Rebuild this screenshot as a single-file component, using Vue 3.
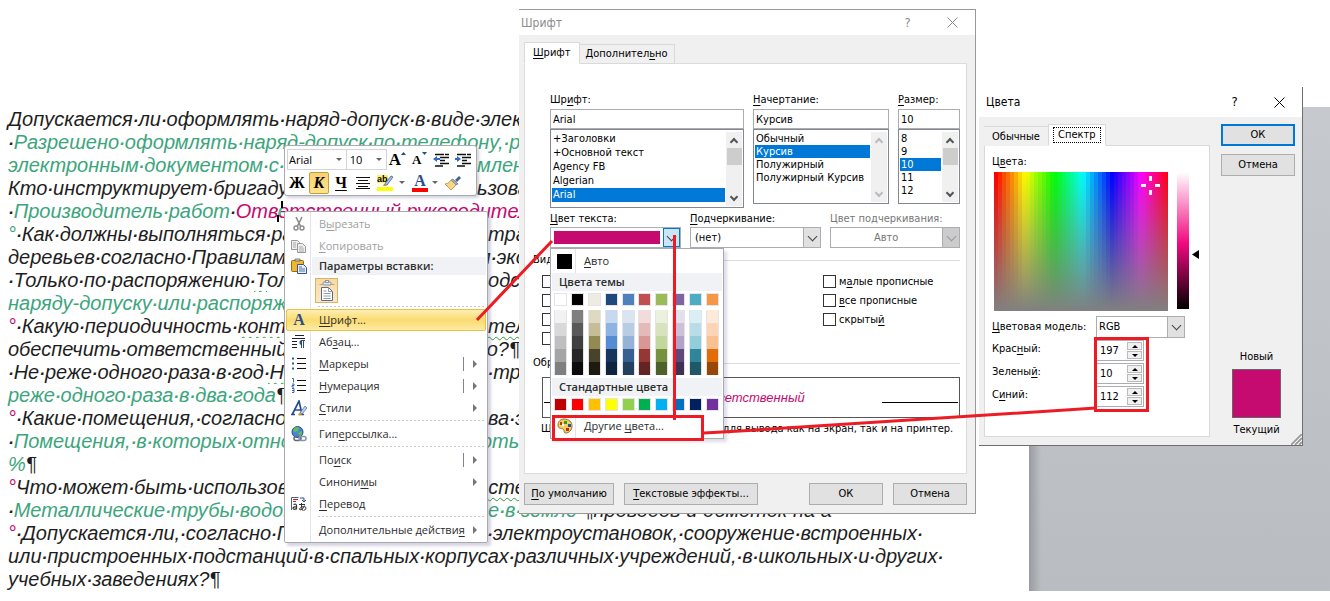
<script setup>
import { ref } from 'vue'

const lines = [
  { head: [['Допускается·ли·оформлять·наряд-допуск·в·виде·электронного·']] },
  { head: [['·'], ['Разрешено·оформлять·наряд-допуск·по·телефону,·радио·', 'green']] },
  { head: [['электронным·документом·с·', 'green']], tail: [['мление', 'green']] },
  { head: [['Кто·инструктирует·бригаду·']], tail: [['ьзованию·']] },
  { head: [['·'], ['Производитель·работ', 'green'], ['·'], ['Ответственный·руководитель', 'pink']] },
  { head: [['°', 'green'], ['·Как·должны·выполняться·ра']], tail: [['отрасль']] },
  { head: [['деревьев·согласно·Правилам']], tail: [['м·эконом']] },
  { head: [['·Только·по·распоряжению'], ['·Т', 'wavy'], ['ол']], tail: [['подстан']] },
  { head: [['наряду-допуску·или·распоряж', 'green']] },
  { head: [['°', 'pink'], ['·Какую·периодичность·'], ['контро', 'wavy']], tail: [['отелеф', 'wavy']] },
  { head: [['обеспечить·ответственный·']], tail: [['го?¶']] },
  { head: [['·Не·реже·одного·раза·в·год'], ['·Не', 'wavy']], tail: [['в·треть']] },
  { head: [['реже·одного·раза·в·два·года', 'green'], ['¶']] },
  { head: [['°', 'pink'], ['·Какие·помещения,·согласно·']], tail: [['ова·эле']] },
  { head: [['·'], ['Помещения,·в·которых·относи', 'green']], tail: [['ють·ещё', 'green']] },
  { head: [['%', 'green'], ['¶']] },
  { head: [['°', 'pink'], ['Что·может·быть·использован']], tail: [['а'], ['стеме', 'wavy']] },
  { head: [['·'], ['Металлические·трубы·водопр', 'green']], tail: [['ие·в·земле·', 'green'], ['¶проводов·и·обмоток·на·а']] },
  { head: [['°', 'pink'], ['·Допускается·ли,·согласно·П']], tail: [['х·электроустановок,·сооружение·встроенных·']] },
  { head: [['или·пристроенных·подстанций·в·спальных·корпусах·различных·учреждений,·в·школьных·и·других·']] },
  { head: [['учебных·заведениях?¶']] }
]

// Splits a run so that space marks can be set at the width of a space.
const pieces = (text) => text.split(/(·)/).filter(Boolean)

const fonts = ['+Заголовки', '+Основной текст', 'Agency FB', 'Algerian', 'Arial']
const styles = ['Обычный', 'Курсив', 'Полужирный', 'Полужирный Курсив']
const sizes = ['8', '9', '10', '11', '12']

const themeColors = [
  ['#ffffff', '#f2f2f2', '#d8d8d8', '#bfbfbf', '#a5a5a5', '#7f7f7f'],
  ['#000000', '#7f7f7f', '#595959', '#3f3f3f', '#262626', '#0c0c0c'],
  ['#eeece1', '#ddd9c3', '#c4bd97', '#938953', '#494429', '#1d1b10'],
  ['#1f497d', '#c6d9f0', '#8db3e2', '#548dd4', '#17365d', '#0f243e'],
  ['#4f81bd', '#dbe5f1', '#b8cce4', '#95b3d7', '#366092', '#244061'],
  ['#c0504d', '#f2dcdb', '#e5b9b7', '#d99694', '#953734', '#632423'],
  ['#9bbb59', '#ebf1dd', '#d7e3bc', '#c3d69b', '#76923c', '#4f6128'],
  ['#8064a2', '#e5e0ec', '#ccc1d9', '#b2a2c7', '#5f497a', '#3f3151'],
  ['#4bacc6', '#dbeef3', '#b7dde8', '#92cddc', '#31859b', '#205867'],
  ['#f79646', '#fdeada', '#fbd5b5', '#fac08f', '#e36c09', '#974806']
]
const standardColors = ['#c00000', '#ff0000', '#ffc000', '#ffff00', '#92d050', '#00b050', '#00b0f0', '#0070c0', '#002060', '#7030a0']

const hues = Array.from({ length: 44 }, (_, i) => Math.round((i * 360) / 43.5))

const red = ref('197')
const green = ref('10')
const blue = ref('112')
</script>

<template>
  <div class="page">
    <main class="doc">
      <div v-for="(line, i) in lines" :key="i" class="line">
        <span class="head" :class="{ cut: line.tail }"><span v-for="(p, j) in line.head" :key="j" :class="p[1]"><span v-for="(w, k) in pieces(p[0])" :key="k" :class="{ dot: w === '·' }">{{ w }}</span></span></span>
        <span v-if="line.tail"><span v-for="(p, j) in line.tail" :key="j" :class="p[1]"><span v-for="(w, k) in pieces(p[0])" :key="k" :class="{ dot: w === '·' }">{{ w }}</span></span></span>
      </div>
    </main>
    <div class="desk"></div>

    <!-- Mini toolbar -->
    <div class="mini" role="toolbar" aria-label="Форматирование">
      <div class="mini-row">
        <button class="mbox mfont">Arial<i class="dn"></i></button>
        <button class="mbox msize">10<i class="dn"></i></button>
        <button class="mi serif big" aria-label="Увеличить размер">A<svg class="sup" viewBox="0 0 5 3"><path d="M0 3L2.500 0 5 3z" fill="#274b7d" /></svg></button>
        <button class="mi serif small" aria-label="Уменьшить размер">A<svg class="sup" viewBox="0 0 5 3"><path d="M0 0h5L2.500 3z" fill="#274b7d" /></svg></button>
        <button class="mi" aria-label="Уменьшить отступ"><svg width="16" height="14" viewBox="0 0 16 14"><path d="M2 1.500h14M7 4.500h9M7 7.500h5M7 10.500h9M2 13h8" stroke="#111" stroke-width="1.400" stroke-dasharray="9 1" fill="none" /><path d="M0 6l4-3v2h3v2H4v2z" fill="#3268c8" /></svg></button>
        <button class="mi" aria-label="Увеличить отступ"><svg width="16" height="14" viewBox="0 0 16 14"><path d="M2 1.500h14M7 4.500h9M7 7.500h5M7 10.500h9M2 13h8" stroke="#111" stroke-width="1.400" stroke-dasharray="9 1" fill="none" /><path d="M6 6L2 3v2H0v2h2v2z" fill="#3268c8" /></svg></button>
      </div>
      <div class="mini-row">
        <button class="mi serif">Ж</button>
        <button class="mi serif on"><em>К</em></button>
        <button class="mi serif"><u>Ч</u></button>
        <button class="mi" aria-label="По центру"><svg width="14" height="12" viewBox="0 0 14 12"><path d="M0 .5h14M2 3.500h10M0 6.500h14M2 9.500h10M0 11.500h14" stroke="#111" /></svg></button>
        <button class="mi wide" aria-label="Выделение"><svg width="18" height="17" viewBox="0 0 18 17"><rect width="11" height="8" y="1" fill="#fff36b" /><text x="0" y="8" font-size="9" font-family="Liberation Sans" font-weight="bold">ab</text><path d="M7 11l7-9 2 1-6 8z" fill="#a9c3e6" stroke="#44608c" stroke-width=".8" /><path d="M6 12l1-2 3 2z" fill="#c79a35" /><rect y="13" width="16" height="4" fill="#ff0" /></svg><i class="dn"></i></button>
        <button class="mi wide" aria-label="Цвет шрифта"><span class="acolor">A</span><i class="dn"></i></button>
        <button class="mi" aria-label="Формат по образцу"><svg width="16" height="14" viewBox="0 0 16 14"><path d="M10 4l4-4 2 2-4 4z" fill="#4a5f91" /><path d="M8 3l5 5-2 1-5-5z" fill="#9db0cc" stroke="#506080" stroke-width=".6" /><path d="M6 4l5 5-5 5L0 8q4 0 6-4z" fill="#f4d888" stroke="#b58a35" stroke-width=".8" /></svg></button>
      </div>
    </div>

    <!-- Context menu -->
    <nav class="menu" aria-label="Контекстное меню">
      <button class="item off"><svg class="ic" viewBox="0 0 16 16"><path d="M5 1l4.500 9M11 1L6.500 10" stroke="#8a8a8a" stroke-width="1.600" /><circle cx="5" cy="12" r="2" fill="none" stroke="#8a8a8a" stroke-width="1.400" /><circle cx="11" cy="12" r="2" fill="none" stroke="#8a8a8a" stroke-width="1.400" /></svg><span>В<u>ы</u>резать</span></button>
      <button class="item off"><svg class="ic" viewBox="0 0 16 16"><path d="M.5 2.500h6l2 2v7h-8z" fill="#eee" stroke="#999" /><path d="M6.500 5.500h5l3 3v6h-8z" fill="#eee" stroke="#999" /><path d="M2 5h3M2 7h3M2 9h3M8 9h4M8 11h5M8 13h5" stroke="#aaa" /></svg><span><u>К</u>опировать</span></button>
      <div class="mhead"><svg class="ic" viewBox="0 0 16 16"><rect x=".5" y="2.500" width="12" height="11" rx="1" fill="#efb62e" stroke="#9b6b12" /><path d="M4 3V1h5v2z" fill="#ccd3df" stroke="#555" stroke-width=".7" /><path d="M6.500 6.500h6l3 3v6h-9z" fill="#e8eefb" stroke="#37568e" /><path d="M8 9h3M8 11h6M8 13h6" stroke="#5573a8" /></svg><b>Параметры вставки:</b></div>
      <div class="paste"><button aria-label="Сохранить исходное форматирование"><svg width="16" height="22" viewBox="0 0 16 22"><path d="M.5 4.500h15" stroke="#b8a58a" /><rect x="4" y="2" width="8" height="3" rx="1" fill="#e6e9ed" stroke="#8a93a0" /><rect x="6.500" y=".5" width="3" height="2" fill="#fff" stroke="#8a93a0" /><path d="M2.500 7.500h7l4 4v9h-11z" fill="#fff" stroke="#5a6c88" /><path d="M9.500 7.500v4h4M4.500 11h3M4.500 13.500h7M4.500 16h7M4.500 18.500h7" stroke="#8a9ab2" fill="none" /></svg></button></div>
      <hr />
      <button class="item hot"><span class="ic letter">A</span><span><u>Ш</u>рифт...</span></button>
      <button class="item"><svg class="ic" viewBox="0 0 16 16"><path d="M4 1.500h9M1 4.500h13M1 7.500h5M1 10.500h5M1 13.500h5" stroke="#222" /><path d="M12.500 7v7M10.500 7v7M14 6.500h-4" stroke="#2c4c86" /><path d="M11 6a2.500 2.500 0 0 0 0 5z" fill="#2c4c86" /></svg><span>Аб<u>з</u>ац...</span></button>
      <button class="item"><svg class="ic" viewBox="0 0 16 16"><path d="M6 2.500h9M6 7.500h9M6 12.500h9" stroke="#111" /><path d="M1 1.500h2v2H1zM1 6.500h2v2H1zM1 11.500h2v2H1z" fill="#2f58a8" /></svg><span><u>М</u>аркеры</span><i class="bar"></i><i class="rt"></i></button>
      <button class="item"><svg class="ic" viewBox="0 0 16 16"><path d="M6 2.500h9M6 7.500h9M6 12.500h9" stroke="#111" /><path d="M1 .5h1.500v4M1 6h2v1.500H1V9h2M1 10.500h2v4H1M1 12.500h2" fill="none" stroke="#2f58a8" stroke-width=".9" /></svg><span><u>Н</u>умерация</span><i class="bar"></i><i class="rt"></i></button>
      <button class="item"><svg class="ic" viewBox="0 0 16 16"><path d="M0 14.500h4M1.500 14L8 1l3 13M4 10h6M8 14.500h5" fill="none" stroke="#2c4c92" stroke-width="1.700" /><path d="M9 13l5-7 2 2-5 6z" fill="#b9d0ef" stroke="#4a6ca4" stroke-width=".7" /><path d="M7 15q1-3 3-2l1 1q-1 2-4 1z" fill="#d79a2e" /></svg><span><u>С</u>тили</span><i class="rt"></i></button>
      <hr />
      <button class="item"><svg class="ic" viewBox="0 0 16 16"><circle cx="6.500" cy="6" r="5.500" fill="#4b86d8" stroke="#234f92" /><path d="M3 2q3-2 5 0l-1 3-3 1-2-1zM7 7l4-2q1 3-2 5z" fill="#5fc052" /><rect x="3" y="10.500" width="7" height="4" rx="2" fill="none" stroke="#5a6a80" stroke-width="1.500" /><rect x="8" y="10.500" width="7" height="4" rx="2" fill="none" stroke="#8595ab" stroke-width="1.500" /></svg><span>Гип<u>е</u>рссылка...</span></button>
      <hr />
      <button class="item"><span class="ic"></span><span>По<u>и</u>ск</span><i class="bar"></i><i class="rt"></i></button>
      <button class="item"><span class="ic"></span><span>Синони<u>м</u>ы</span><i class="rt"></i></button>
      <button class="item"><svg class="ic" viewBox="0 0 16 16"><path d="M.5 14V1.500h7" fill="none" stroke="#4a5f8c" /><path d="M2 3.500h5M2 5.500h3" stroke="#c82020" /><path d="M9 2h4v3M11 4l2 2 2-2" fill="none" stroke="#2c4c86" /><path d="M2.500 8.500q3-1 3 1v4M5.500 11q-3.500-.5-3.500 1.300t3.500.3" fill="none" stroke="#333" stroke-width="1.200" /><path d="M8 8.500h6M10.500 7q-.5 5 1 7.500M13.500 9.500q-2 5-4.500 4.500-1.500-1.500 1.500-3 4.500-1 4.500 1t-2.500 2.500" fill="none" stroke="#333" /></svg><span><u>П</u>еревод</span></button>
      <hr />
      <button class="item"><span class="ic"></span><span>Дополнительные действи<u>я</u></span><i class="rt"></i></button>
    </nav>

    <!-- Font dialog -->
    <section class="win fontwin" aria-label="Шрифт">
      <header class="title muted"><span>Шрифт</span><button aria-label="Справка">?</button><button aria-label="Закрыть"><svg width="11" height="11" viewBox="0 0 11 11"><path d="M.5.5l10 10M10.500.5l-10 10" stroke="#888" /></svg></button></header>
      <div class="body">
        <div class="tabs"><button class="tab act"><u>Ш</u>рифт</button><button class="tab">Дополнител<u>ь</u>но</button></div>
        <div class="panel">
          <div class="pickers">
            <div>
              <label for="fn">Шр<u>и</u>фт:</label>
              <input id="fn" type="text" value="Arial" />
              <div class="list tall"><ul role="listbox" aria-label="Шрифт"><li v-for="f in fonts" :key="f" role="option" :class="{ sel: f === 'Arial' }">{{ f }}</li></ul><div class="sb"><i class="up"></i><i class="thumb"></i><i class="down"></i></div></div>
            </div>
            <div>
              <label for="fs"><u>Н</u>ачертание:</label>
              <input id="fs" type="text" value="Курсив" />
              <div class="list"><ul role="listbox" aria-label="Начертание"><li v-for="f in styles" :key="f" role="option" :class="{ sel: f === 'Курсив' }">{{ f }}</li></ul><div class="sb dis"><i class="up"></i><i class="down"></i></div></div>
            </div>
            <div>
              <label for="fz"><u>Р</u>азмер:</label>
              <input id="fz" type="text" value="10" />
              <div class="list"><ul role="listbox" aria-label="Размер"><li v-for="f in sizes" :key="f" role="option" :class="{ sel: f === '10' }">{{ f }}</li></ul><div class="sb"><i class="up"></i><i class="thumb"></i><i class="down"></i></div></div>
            </div>
          </div>
          <div class="combos">
            <div>
              <label for="fc"><u>Ц</u>вет текста:</label>
              <button id="fc" class="combo colorbtn"><i class="fill"></i><i class="arr hotarr"></i></button>
            </div>
            <div>
              <label for="ul"><u>П</u>одчеркивание:</label>
              <div class="combo"><select id="ul"><option>(нет)</option></select><i class="arr"></i></div>
            </div>
            <div class="disabled">
              <label for="uc">Цвет подчеркивания:</label>
              <div class="combo"><select id="uc" class="mid" disabled><option>Авто</option></select><i class="arr"></i></div>
            </div>
          </div>
          <div class="group"><span>Видоизменение</span></div>
          <div class="checks">
            <div>
              <label><input type="checkbox" />зачеркнутый</label>
              <label><input type="checkbox" />двойное зачеркивание</label>
              <label><input type="checkbox" />надстрочный</label>
              <label><input type="checkbox" />подстрочный</label>
            </div>
            <div>
              <label><input type="checkbox" /><span>м<u>а</u>лые прописные</span></label>
              <label><input type="checkbox" /><span><u>в</u>се прописные</span></label>
              <label><input type="checkbox" /><span>скрыты<u>й</u></span></label>
            </div>
          </div>
          <div class="group"><span>Образец</span></div>
          <div class="preview"><i></i><span>Ответственный</span><i></i></div>
          <p class="hint">Шрифт TrueType. Он используется для вывода как на экран, так и на принтер.</p>
        </div>
        <footer class="foot"><button class="btn w90"><u>П</u>о умолчанию</button><button class="btn w134"><u>Т</u>екстовые эффекты...</button><button class="btn push">ОК</button><button class="btn">Отмена</button></footer>
      </div>

      <div class="pop">
        <button class="prow"><i class="black"></i><span><u>А</u>вто</span></button>
        <div class="phead">Цвета темы</div>
        <div class="sw">
          <div v-for="c in themeColors" :key="c[0]" class="swcol">
            <button class="chip" :aria-label="c[0]" :style="{ background: c[0] }"></button>
            <div class="tints"><button v-for="t in c.slice(1)" :key="t" :aria-label="t" :style="{ background: t }"></button></div>
          </div>
        </div>
        <div class="phead">Стандартные цвета</div>
        <div class="sw std"><button v-for="c in standardColors" :key="c" class="chip" :aria-label="c" :style="{ background: c }"></button></div>
        <button class="prow"><svg width="16" height="16" viewBox="0 0 16 16"><path d="M7 1c5 0 8 3 8 7s-3 7-6 7c-3 0-1-3-3-4s-5 0-5-4 3-6 6-6z" fill="#f3cf5e" stroke="#9a6f1c" /><path d="M5 6h2v2H5z" fill="#fff" /><path d="M7 3h3v3H7z" fill="#2a9a3a" /><path d="M11 6h3v3h-3z" fill="#2450c0" /><path d="M9 10h3v3H9z" fill="#c82a20" /><path d="M3 4h2v3H3z" fill="#b03a20" /></svg><span>Другие <u>ц</u>вета...</span></button>
      </div>
    </section>

    <!-- Colour dialog -->
    <section class="win colorwin" aria-label="Цвета">
      <header class="title"><span>Цвета</span><button aria-label="Справка">?</button><button aria-label="Закрыть"><svg width="11" height="11" viewBox="0 0 11 11"><path d="M.5.5l10 10M10.500.5l-10 10" stroke="#000" /></svg></button></header>
      <div class="cbody">
        <div class="cmain">
          <div class="tabs"><button class="tab ghost">Обычные</button><button class="tab act"><span class="focus">Спектр</span></button></div>
          <div class="cpanel">
            <span class="clabel">Ц<u>в</u>ета:</span>
            <div class="pick">
              <div class="spectrum">
                <i v-for="(h, i) in hues" :key="i" :style="{ background: `hsl(${h}, 100%, 50%)` }"></i>
                <svg class="cross" width="19" height="19" viewBox="0 0 19 19"><path d="M8 0h3v5H8zM8 14h3v5H8zM0 8h5v3H0zM14 8h5v3h-5z" fill="#fff" /></svg>
              </div>
              <div class="lum"></div>
              <svg class="ptr" width="7" height="9" viewBox="0 0 7 9"><path d="M7 0v9L0 4.500z" /></svg>
            </div>
            <div class="field model"><label for="cm"><u>Ц</u>ветовая модель:</label><div class="combo"><select id="cm"><option>RGB</option></select><i class="arr"></i></div></div>
            <div class="field"><label for="cr">Крас<u>н</u>ый:</label><div class="spin"><input id="cr" v-model="red" type="text" /><span><button aria-label="Больше"><i class="su"></i></button><button aria-label="Меньше"><i class="sd"></i></button></span></div></div>
            <div class="field"><label for="cg">Зелены<u>й</u>:</label><div class="spin"><input id="cg" v-model="green" type="text" /><span><button aria-label="Больше"><i class="su"></i></button><button aria-label="Меньше"><i class="sd"></i></button></span></div></div>
            <div class="field"><label for="cb">С<u>и</u>ний:</label><div class="spin"><input id="cb" v-model="blue" type="text" /><span><button aria-label="Больше"><i class="su"></i></button><button aria-label="Меньше"><i class="sd"></i></button></span></div></div>
          </div>
        </div>
        <div class="cside">
          <button class="btn prime">ОК</button>
          <button class="btn">Отмена</button>
          <div class="cur"><span>Новый</span><i></i><span>Текущий</span></div>
        </div>
      </div>
      <svg class="grip" width="11" height="11" viewBox="0 0 11 11"><path d="M0 11L11 0v11z" fill="#fff" /><path d="M0 11L11 0M4 11l7-7M8 11l3-3" stroke="#999" stroke-width="1.800" /></svg>
    </section>

    <!-- Callouts -->
    <svg class="marks" viewBox="0 0 1330 601" width="1330" height="601">
      <path d="M282 201v7M278 215v7" stroke="#000" stroke-width="2" />
      <path d="M281 208l-2 7" stroke="#2ad07c" stroke-width="2" />
      <g fill="none" stroke="#ed1c24" stroke-width="3">
        <path d="M477 320L552 241M704 433L740 431 1096 408" />
        <path d="M674.500 235V420" />
        <rect x="553.500" y="416.500" width="149" height="23" />
        <rect x="1095.500" y="338.500" width="52" height="72" />
      </g>
    </svg>
  </div>
</template>

<style>
body { margin: 0; background: #fff; }
</style>

<style scoped>
.page, .page * { box-sizing: border-box; }
.page {
  position: relative;
  display: grid;
  grid-template-columns: 1fr 301px;
  min-height: 601px;
  padding: 107px 0 10px;
  overflow: hidden;
  font: 11px/14px 'DejaVu Sans Condensed', 'DejaVu Sans', sans-serif;
  color: #000;
}
button, input, select { font: inherit; color: inherit; margin: 0; padding: 0; border: 0; background: none; border-radius: 0; }
input, select { outline: 0; }
u { text-decoration: underline; text-underline-offset: 2px; text-decoration-thickness: 1px; }
i { font-style: normal; }

.doc { padding: 1px 0 0 8px; min-width: 0; height: 484px; font: italic 20px/23px 'Liberation Sans', Arial, sans-serif; color: #1e1e22; white-space: nowrap; overflow: hidden; }
.line { display: flex; height: 23px; }
.cut { flex: none; width: 469px; overflow: hidden; }
.dot { font-size: 17px; font-weight: bold; }
.green { color: #3ca57c; }
.pink { color: #c50a70; }
.wavy { text-decoration: underline wavy #2f9a3c 1px; text-underline-offset: 3px; }
.desk { background: linear-gradient(90deg, #989ca1, rgba(152, 156, 161, 0) 12px), linear-gradient(#c6cace, #b9bdc1); }

.mini { position: absolute; left: 284px; top: 145px; width: 193px; height: 51px; padding: 2px; background: #fff; border: 1px solid #a9abb0; border-radius: 3px; box-shadow: 2px 2px 3px rgba(80, 80, 120, .25); font-family: 'Open Sans', 'Noto Sans', sans-serif; }
.mini-row { display: flex; align-items: center; height: 23px; }
.mini-row + .mini-row { gap: 2px; }
.mini-row + .mini-row .mi { width: 20px; }
.mini-row + .mini-row .wide { width: 32px; }
.mbox { display: flex; align-items: center; justify-content: space-between; height: 21px; padding: 0 4px 0 2px; border: 1px solid #d4d4d8; }
.mfont { width: 60px; padding-left: 1px; }
.msize { width: 40px; padding-left: 3px; border-left: 0; }
.dn { border: 3px solid transparent; border-top-color: #666; border-bottom: 0; }
.mi { display: flex; align-items: center; justify-content: center; gap: 4px; width: 22px; height: 22px; }
.serif { font: bold 16px/18px 'Liberation Serif', serif; gap: 0; }
.serif.big { font-size: 17px; }
.serif.small { font-size: 13px; }
.sup { width: 5px; height: 3px; align-self: flex-start; margin-top: 3px; }
.on { background: linear-gradient(#fbd171, #fce38c); border: 1px solid #c29b3d; border-radius: 2px; }
.acolor { width: 16px; border-bottom: 4px solid #f00; font: bold 16px/14px 'Liberation Serif', serif; color: #2b4c8c; }

.menu { position: absolute; left: 284px; top: 211px; width: 204px; padding: 1px 1px; background: linear-gradient(90deg, #fff 25px, #e2e4e7 25px, #e2e4e7 26px, #fff 26px); border: 1px solid #a7abb0; border-radius: 2px; box-shadow: 3px 3px 3px rgba(90, 80, 140, .25); font: 11px/16px 'Open Sans', 'Noto Sans', sans-serif; color: #2c2c2c; }
.item { display: flex; align-items: center; width: 100%; height: 22px; padding: 0 8px 0 4px; text-align: left; border: 1px solid transparent; border-radius: 2px; white-space: nowrap; }
.ic { width: 16px; height: 16px; margin-right: 12px; flex: none; }
.item > span:nth-child(2) { flex: 1; }
.off { color: #a0a0a0; }
.hot { background: linear-gradient(#fdeeb4, #fbdc70 50%, #fdeaa2); border-color: #e8c04a; }
.letter { font: bold 16px/16px 'Liberation Serif', serif; color: #2b4c8c; text-align: center; }
.bar { width: 1px; height: 14px; margin-right: 9px; background: #7d8790; }
.rt { border: 4px solid transparent; border-left-color: #777; border-right: 0; }
.mhead { display: flex; align-items: center; height: 18px; padding-left: 5px; background: linear-gradient(90deg, transparent 26px, #f0f2f5 26px); }
.mhead b { font-weight: 600; }
.paste { height: 30px; padding: 3px 0 0 29px; }
.paste button { display: grid; place-items: center; width: 23px; height: 25px; background: linear-gradient(#fbd9a4, #fbe8c4); border: 1px solid #d9b36a; }
.menu hr { height: 4px; margin: 0 2px 0 32px; border: 0; background: repeating-linear-gradient(90deg, #c8c8c8 0 2px, transparent 2px 4px) 0 1px / 100% 1px no-repeat; }

.win { position: absolute; background: #f0f0f0; }
.fontwin { left: 519px; top: 9px; width: 457px; height: 505px; border: solid #999; border-width: 1px 1px 1px 0; }
.colorwin { left: 979px; top: 87px; width: 324px; height: 359px; border: solid #6e6e6e; border-width: 0 1px 1px 0; }
.title { display: flex; align-items: center; height: 25px; padding-left: 2px; background: #fff; font-size: 12px; }
.title span { flex: 1; }
.title button { width: 45px; font-size: 13px; }
.title svg { display: block; margin: auto; }
.muted { color: #8c8c8c; }
.body { padding: 7px 8px 0 5px; }
.tabs { display: flex; align-items: flex-end; position: relative; margin-bottom: -1px; }
.tab { height: 20px; padding: 0 6px; border: 1px solid #d9d9d9; border-left: 0; background: #f0f0f0; }
.tab.act { height: 22px; padding: 0 8px; background: #fff; border-left: 1px solid #d9d9d9; border-bottom-color: #fff; }
.panel { height: 411px; padding: 29px 6px 0 8px; background: #fff; border: 1px solid #dcdcdc; }
.pickers, .combos { display: grid; grid-template-columns: 194px 136px 62px; gap: 9px; padding-left: 17px; }
.pickers label { display: block; height: 16px; white-space: nowrap; }
.combos label { display: block; height: 15px; white-space: nowrap; }
.pickers input { display: block; width: 100%; height: 20px; padding: 0 2px; border: 1px solid #abadb3; }
.list { display: flex; height: 75px; padding: 2px 1px 1px; border: 1px solid #828790; }
.list ul { flex: 1; margin: 0; padding: 0; list-style: none; }
.list li { height: 13px; padding-left: 1px; line-height: 13px; white-space: nowrap; }
.list.tall { height: 79px; }
.list.tall li { height: 14px; line-height: 14px; }
.list .sel { background: #0078d7; color: #fff; }
.sb { display: flex; flex-direction: column; align-items: center; width: 16px; margin-left: 1px; background: #f0f0f0; }
.up, .down { width: 6px; height: 6px; border: solid #555; transform: rotate(45deg); }
.up { margin: 7px 0 3px; border-width: 2px 0 0 2px; }
.down { margin: auto 0 6px; border-width: 0 2px 2px 0; }
.dis i { border-color: #bbb; }
.thumb { width: 15px; height: 17px; background: #cdcdcd; }
.combos { grid-template-columns: 131px 131px 130px; margin-top: 4px; }
.combo { position: relative; display: flex; width: 100%; height: 21px; border: 1px solid #abadb3; background: #fff; }
.combo select { flex: 1; width: 100%; appearance: none; padding-left: 4px; }
.combo .mid { padding-left: 43px; opacity: 1; color: #777; }
.arr { display: grid; place-items: center; width: 17px; flex: none; background: #e1e1e1; border-left: 1px solid #adadad; }
.arr::after { content: ''; width: 6px; height: 6px; margin-top: -3px; border: solid #444; border-width: 0 1px 1px 0; transform: rotate(45deg); }
.disabled { color: #777; }
.disabled .arr { background: #ccc; }
.disabled .arr::after { border-color: #999; }
.colorbtn .fill { flex: 1; margin: 3px 3px; background: #c50a70; }
.colorbtn .hotarr { background: #cce4f7; border: 1px solid #0078d7; }
.group { display: flex; align-items: center; gap: 4px; height: 14px; margin-top: 5px; }
.group::after { content: ''; flex: 1; height: 1px; background: #dcdcdc; }
.checks { display: grid; grid-template-columns: 281px 1fr; padding: 5px 0 0 9px; height: 84px; }
.checks label { display: flex; align-items: center; gap: 3px; height: 19px; white-space: nowrap; }
.checks input { appearance: none; width: 13px; height: 13px; border: 1px solid #333; background: #fff; }
.preview { display: flex; justify-content: space-between; margin: 7px 0 0 9px; height: 41px; padding: 0 1px; border: 1px solid #555; font: italic 13px/39px 'Liberation Sans', Arial, sans-serif; color: #c50a70; }
.preview i { width: 76px; height: 25px; border-bottom: 1px solid #000; }
.hint { margin: 4px 0 0 8px; white-space: nowrap; }
.foot { display: flex; gap: 10px; margin-top: 9px; }
.btn { width: 74px; height: 22px; background: #e1e1e1; border: 1px solid #adadad; white-space: nowrap; }
.w90 { width: 90px; }
.w134 { width: 134px; }
.push { margin-left: auto; }

.pop { position: absolute; left: 31px; top: 238px; width: 174px; padding: 0 1px; background: #fff; border: 1px solid #a7abb0; box-shadow: 3px 3px 3px rgba(90, 80, 140, .2); font: 11px/16px 'Open Sans', 'Noto Sans', sans-serif; color: #2c2c2c; }
.prow { display: flex; align-items: center; width: 100%; height: 24px; padding-left: 5px; background: linear-gradient(90deg, transparent 23px, #e2e4e7 23px, #e2e4e7 24px, transparent 24px); }
.prow span { margin-left: 12px; }
.prow svg { margin-right: -1px; }
.black { width: 15px; height: 15px; background: #000; }
.phead { height: 18px; padding-left: 7px; background: #f0f2f5; font-weight: 600; line-height: 18px; }
.sw { display: flex; justify-content: space-between; padding: 2px 3px 3px 2px; }
.swcol { width: 13px; }
.chip { display: block; width: 13px; height: 13px; border: 1px solid #e2e4e7; }
.tints { display: flex; flex-direction: column; margin-top: 4px; border: solid #e2e4e7; border-width: 0 1px; }
.tints button { height: 13px; }

.colorwin .title { height: 30px; padding-left: 7px; }
.cbody { display: flex; justify-content: space-between; padding: 7px 7px 0 5px; }
.cmain { width: 226px; }
.ghost { width: 64px; padding: 0 2px 0 8px; border-bottom: 0; text-align: left; border-right: 0; }
.colorwin .tab.act { padding: 0 4px; }
.focus { display: block; padding: 0 4px; border: 1px dotted #000; }
.cpanel { height: 292px; padding: 9px 7px 0; background: #fff; border: 1px solid #d9d9d9; }
.clabel { display: block; height: 17px; }
.pick { display: flex; padding-left: 2px; }
.spectrum { position: relative; display: flex; width: 174px; height: 139px; overflow: hidden; }
.spectrum i { flex: none; width: 4px; }
.spectrum::after { content: ''; position: absolute; inset: 0; background: linear-gradient(rgba(128, 128, 128, 0), #808080); }
.cross { position: absolute; z-index: 1; left: 147px; top: 4px; }
.lum { width: 12px; height: 137px; margin-left: 9px; background: linear-gradient(#fff, #f2087f 52%, #000); }
.ptr { margin: 78px 0 0 3px; }
.field { display: flex; height: 23px; justify-content: space-between; padding-right: 58px; }
.field label { padding-top: 2px; white-space: nowrap; }
.model { padding-right: 17px; margin: 5px 0 1px; }
.model label { padding-top: 4px; }
.model .combo { width: 89px; height: 22px; }
.model .combo select { padding-left: 2px; }
.spin { display: flex; width: 48px; height: 21px; border: 1px solid #abadb3; }
.spin input { width: 29px; padding-left: 3px; }
.spin span { flex: 1; display: flex; flex-direction: column; gap: 1px; padding: 1px 1px; }
.spin button { display: grid; place-items: center; flex: 1; background: #f0f0f0; border: 1px solid #bbb; }
.su, .sd { border: 3px solid transparent; }
.su { border-bottom-color: #000; border-top: 0; }
.sd { border-top-color: #000; border-bottom: 0; }
.cside { display: flex; flex-direction: column; width: 74px; gap: 8px; }
.prime { border: 2px solid #0078d7; }
.cur { display: flex; flex-direction: column; align-items: center; gap: 5px; margin-top: 166px; padding-right: 3px; }
.cur i { width: 49px; height: 49px; background: #c50a70; border: 1px solid #666; }
.cur span { white-space: nowrap; }
.grip { position: absolute; right: 0; bottom: 0; }
.marks { position: absolute; left: 0; top: 0; pointer-events: none; }
</style>
